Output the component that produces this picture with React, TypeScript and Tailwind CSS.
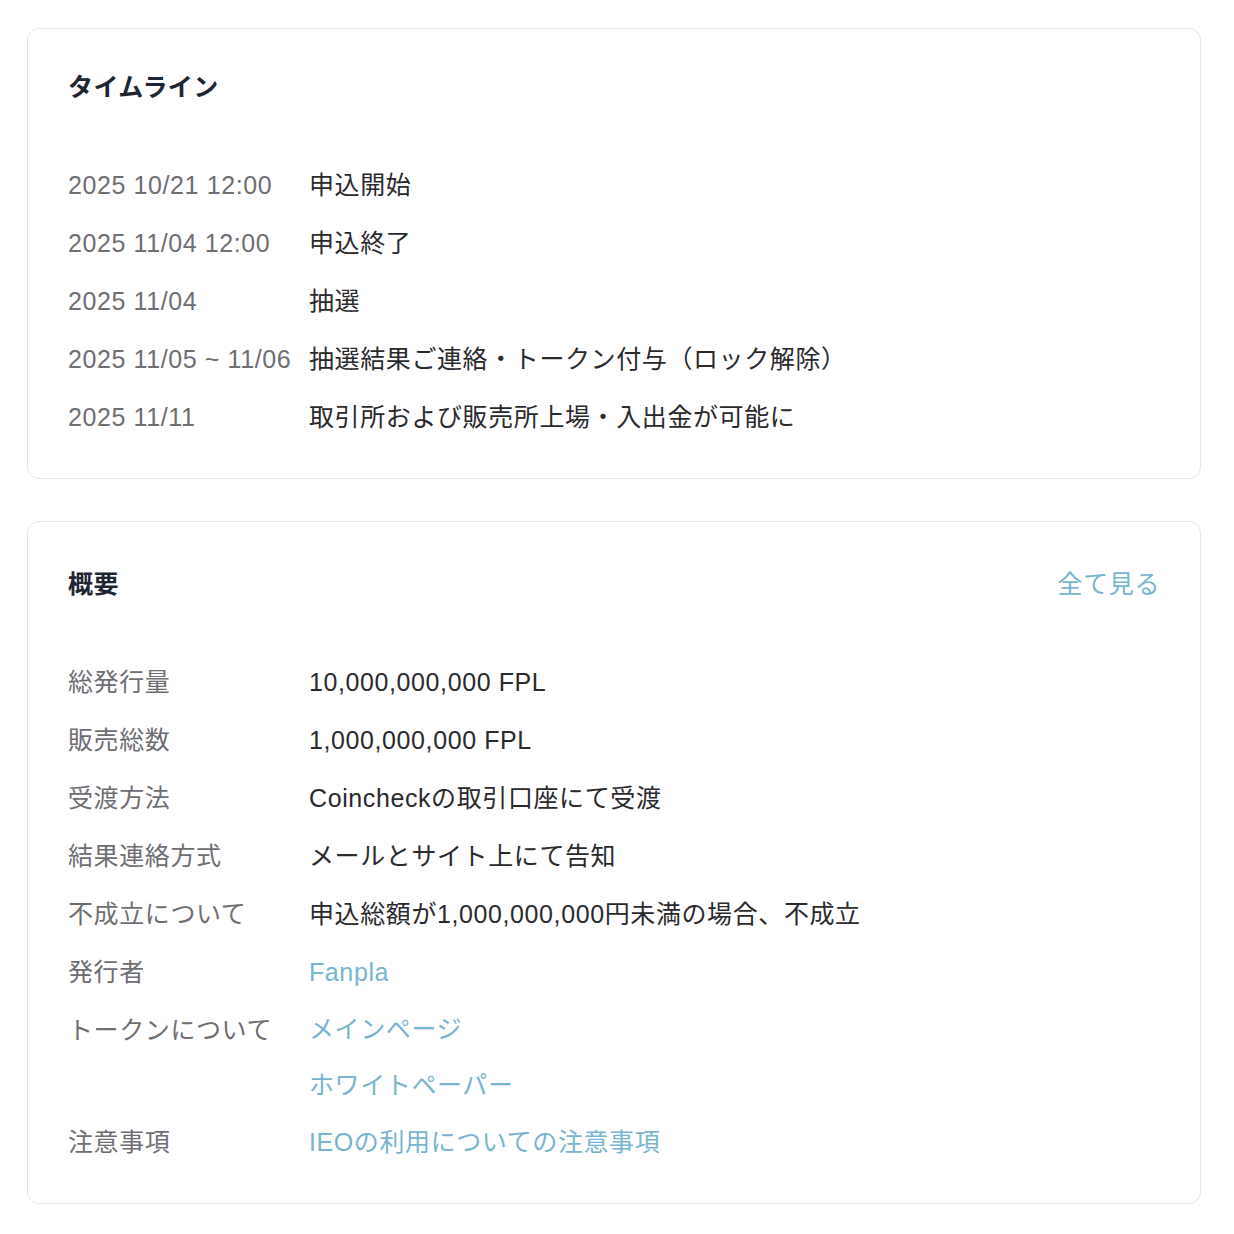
const FONT = "font-['Liberation_Sans','Noto_Sans_CJK_JP',sans-serif]";

const TIMELINE = [
  { date: "2025 10/21 12:00", label: "申込開始" },
  { date: "2025 11/04 12:00", label: "申込終了" },
  { date: "2025 11/04", label: "抽選" },
  { date: "2025 11/05 ~ 11/06", label: "抽選結果ご連絡・トークン付与（ロック解除）" },
  { date: "2025 11/11", label: "取引所および販売所上場・入出金が可能に" },
];

type Row = { key: string; values: string[]; link?: boolean };

const SUMMARY: Row[] = [
  { key: "総発行量", values: ["10,000,000,000 FPL"] },
  { key: "販売総数", values: ["1,000,000,000 FPL"] },
  { key: "受渡方法", values: ["Coincheckの取引口座にて受渡"] },
  { key: "結果連絡方式", values: ["メールとサイト上にて告知"] },
  { key: "不成立について", values: ["申込総額が1,000,000,000円未満の場合、不成立"] },
  { key: "発行者", values: ["Fanpla"], link: true },
  { key: "トークンについて", values: ["メインページ", "ホワイトペーパー"], link: true },
  { key: "注意事項", values: ["IEOの利用についての注意事項"], link: true },
];

export default function App() {
  return (
    <div className={`${FONT} bg-white min-h-[1234px] pt-[28px] pl-[27px]`}>
      <div className="w-[1174px] flex flex-col gap-[42px]">
        <section className="rounded-[12px] border border-[#e3e6e8] px-[40px] pt-[40px] pb-[31px]">
          <h2 className="text-[25px] leading-[36px] font-bold text-[#1e2533] tracking-[0.4px]">タイムライン</h2>
          <div className="mt-[52px]">
            {TIMELINE.map((t) => (
              <div key={t.date} className="flex h-[58px] items-center text-[25px] tracking-[0.6px]">
                <span className="w-[241px] shrink-0 text-[#6e6e73]">{t.date}</span>
                <span className="text-[#2a2a2d]">{t.label}</span>
              </div>
            ))}
          </div>
        </section>

        <section className="rounded-[12px] border border-[#e3e6e8] px-[40px] pt-[44px] pb-[31px]">
          <div className="flex items-center justify-between">
            <h2 className="text-[25px] leading-[36px] font-bold text-[#1e2533] tracking-[0.4px]">概要</h2>
            <a className="text-[25px] leading-[36px] text-[#78b4cf] tracking-[0.6px]">全て見る</a>
          </div>
          <div className="mt-[52px]">
            {SUMMARY.map((r) => (
              <div key={r.key} className="flex text-[25px] tracking-[0.6px]">
                <span className="w-[241px] shrink-0 h-[58px] flex items-center text-[#6e6e73]">{r.key}</span>
                <div className="flex flex-col">
                  {r.values.map((v) => (
                    <span
                      key={v}
                      className={`flex items-center ${r.values.length > 1 ? "h-[56px]" : "h-[58px]"} ${
                        r.link ? "text-[#78b4cf]" : "text-[#2a2a2d]"
                      }`}
                    >
                      {v}
                    </span>
                  ))}
                </div>
              </div>
            ))}
          </div>
        </section>
      </div>
    </div>
  );
}
